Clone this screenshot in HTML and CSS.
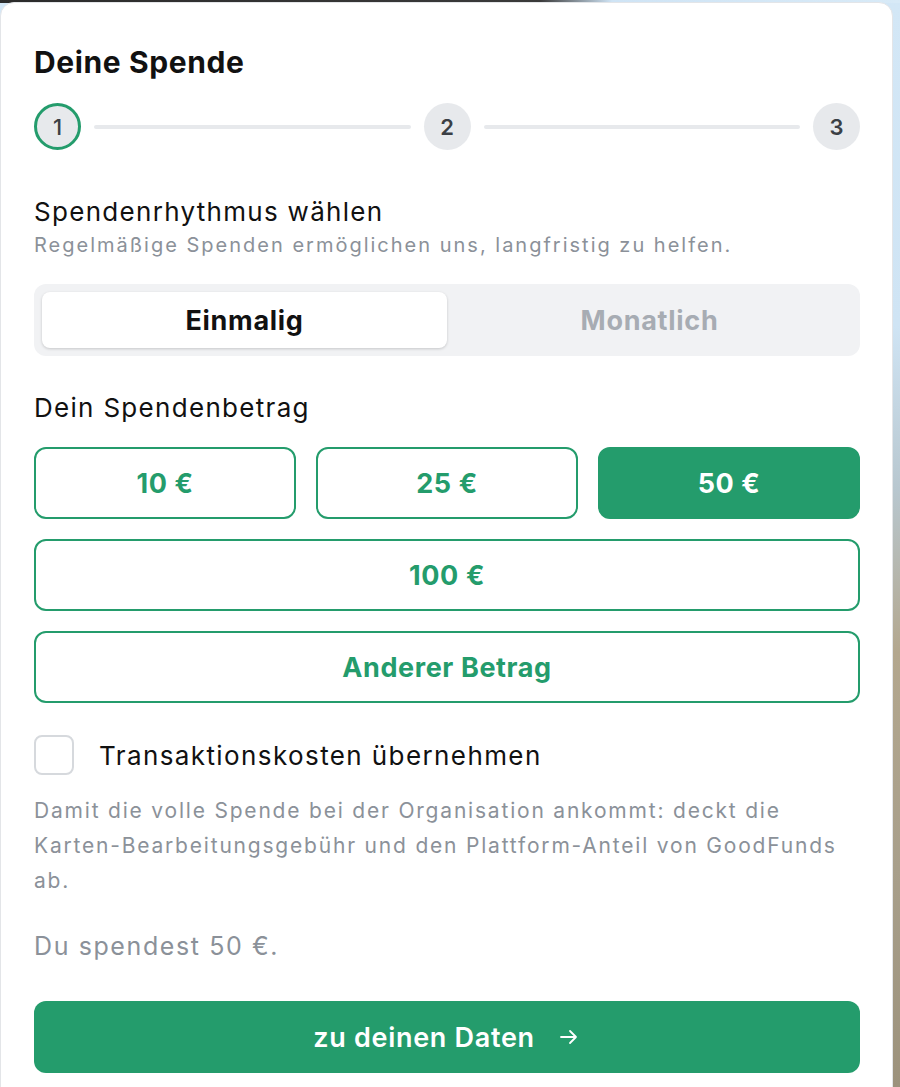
FILE: index.html
```html
<!DOCTYPE html>
<html lang="de">
<head>
<meta charset="utf-8">
<title>Deine Spende</title>
<link rel="stylesheet" href="styles.css">
</head>
<body>
<main class="card">
  <h1 class="title">Deine Spende</h1>

  <div class="stepper">
    <span class="step active">1</span>
    <span class="line"></span>
    <span class="step">2</span>
    <span class="line"></span>
    <span class="step">3</span>
  </div>

  <section class="rhythm">
    <h2 class="label">Spendenrhythmus wählen</h2>
    <p class="hint">Regelmäßige Spenden ermöglichen uns, langfristig zu helfen.</p>
    <div class="toggle">
      <button class="toggle-btn selected">Einmalig</button>
      <button class="toggle-btn">Monatlich</button>
    </div>
  </section>

  <section class="amount">
    <h2 class="label">Dein Spendenbetrag</h2>
    <div class="amount-grid">
      <button class="amt">10 €</button>
      <button class="amt">25 €</button>
      <button class="amt selected">50 €</button>
      <button class="amt wide">100 €</button>
      <button class="amt wide">Anderer Betrag</button>
    </div>
  </section>

  <label class="check">
    <span class="box"></span>
    <span class="check-text">Transaktionskosten übernehmen</span>
  </label>
  <p class="desc">Damit die volle Spende bei der Organisation ankommt: deckt die Karten-Bearbeitungsgebühr und den Plattform-Anteil von GoodFunds ab.</p>

  <p class="summary">Du spendest 50 €.</p>

  <button class="next">zu deinen Daten <span class="arrow">
    <svg width="24" height="24" viewBox="0 0 24 24" fill="none" stroke="#fff" stroke-width="1.8" stroke-linecap="round" stroke-linejoin="round"><path d="M4 12h15M13 6l6 6-6 6"/></svg>
  </span></button>
</main>
</body>
</html>
```

FILE: styles.css
```css
* { box-sizing: border-box; }

html, body {
  margin: 0;
  height: 100%;
}

body {
  font-family: Inter, "Noto Sans", sans-serif;
  color: #111;
  background:
    linear-gradient(to right, #2b2b2b 0, #3a3a3a 60%, #cfe4f5 68%, #d8eaf7 100%) top / 100% 3px no-repeat,
    linear-gradient(to bottom, #d3e7f6 0, #cfe4f4 30%, #b8c7cf 45%, #b3a78e 60%, #a89f8b 80%, #9c927c 100%);
  padding: 2px 7px 0 0;
  overflow: hidden;
}

.card {
  background: #fff;
  border: 1px solid #e3e5e8;
  border-radius: 14px;
  padding: 41px 32px 20px 33px;
  min-height: 1100px;
}

.title {
  margin: 0;
  font-size: 30px;
  font-weight: 700;
  letter-spacing: 0.6px;
  line-height: 36px;
}

.stepper {
  display: flex;
  align-items: center;
  gap: 13px;
  margin-top: 23px;
}

.step {
  width: 47px;
  height: 47px;
  flex: none;
  border-radius: 50%;
  background: #e7e9ec;
  display: flex;
  align-items: center;
  justify-content: center;
  font-size: 22px;
  font-weight: 600;
  color: #3b3f45;
}

.step.active {
  border: 3px solid #249c6c;
  font-weight: 500;
}

.line {
  flex: 1;
  height: 4px;
  background: #e7e9ec;
  border-radius: 2px;
}

.rhythm { margin-top: 46px; }

.label {
  margin: 0;
  font-size: 26px;
  font-weight: 400;
  line-height: 32px;
  letter-spacing: 1.3px;
}

.hint {
  margin: 4px 0 0;
  font-size: 20px;
  line-height: 26px;
  letter-spacing: 2px;
  color: #8b9199;
}

.toggle {
  margin-top: 26px;
  display: grid;
  grid-template-columns: 1fr 1fr;
  background: #f1f2f4;
  border-radius: 12px;
  padding: 8px;
  height: 72px;
}

.toggle-btn {
  border: 0;
  background: transparent;
  font-family: inherit;
  font-size: 27px;
  font-weight: 700;
  color: #a7acb3;
  border-radius: 8px;
  letter-spacing: 0.7px;
}

.toggle-btn.selected {
  background: #fff;
  color: #111;
  box-shadow: 0 1px 3px rgba(0,0,0,0.18);
}

.amount { margin-top: 36px; }

.amount-grid {
  margin-top: 23px;
  display: grid;
  grid-template-columns: repeat(3, 1fr);
  gap: 20px 20px;
}

.amt {
  height: 72px;
  border: 2px solid #249c6c;
  border-radius: 12px;
  background: #fff;
  font-family: inherit;
  font-size: 27px;
  font-weight: 700;
  color: #249c6c;
  letter-spacing: 0.6px;
}

.amt.selected {
  background: #249c6c;
  color: #fff;
}

.amt.wide { grid-column: 1 / -1; }

.check {
  display: flex;
  align-items: center;
  gap: 25px;
  margin-top: 32px;
}

.box {
  width: 40px;
  height: 40px;
  border: 2px solid #d6d9dd;
  border-radius: 8px;
  flex: none;
}

.check-text {
  font-size: 26px;
  letter-spacing: 1.4px;
}

.desc {
  margin: 18px 0 0;
  font-size: 21px;
  line-height: 35px;
  letter-spacing: 1.8px;
  color: #8b9199;
}

.summary {
  margin: 33px 0 0;
  font-size: 25px;
  line-height: 30px;
  letter-spacing: 1.6px;
  color: #8b9199;
}

.next {
  margin-top: 40px;
  width: 100%;
  height: 72px;
  border: 0;
  border-radius: 12px;
  background: #249c6c;
  color: #fff;
  font-family: inherit;
  font-size: 27px;
  font-weight: 600;
  letter-spacing: 0.7px;
  display: flex;
  align-items: center;
  justify-content: center;
  gap: 22px;
}

.arrow { display: flex; }
```
